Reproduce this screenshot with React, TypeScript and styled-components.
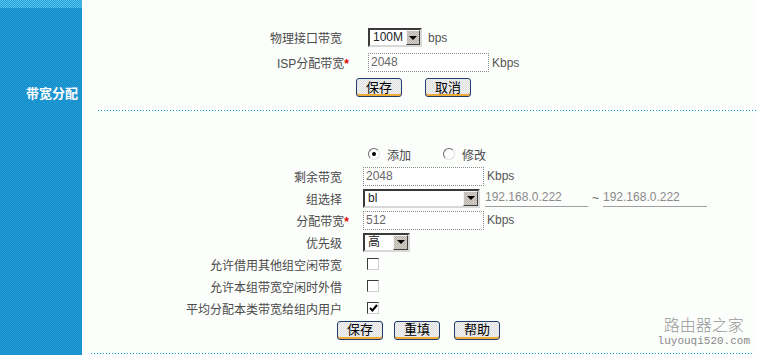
import styled, { createGlobalStyle } from 'styled-components';

const GlobalStyle = createGlobalStyle`
  html, body {
    margin: 0;
    padding: 0;
  }
  body {
    background: #fcfefc;
    font-family: "Liberation Sans", "Noto Sans CJK SC", sans-serif;
    font-size: 12px;
    color: #444;
  }
`

const Page = styled.div`
  position: relative;
  display: flex;
  width: 757px;
  height: 355px;
  overflow: hidden;
  background: #fcfefc;
`

const Sidebar = styled.aside`
  width: 82px;
  flex: none;
  display: flex;
  flex-direction: column;
  background: repeating-conic-gradient(#168cc8 0 25%, #1f9bd5 0 50%) 0 0 / 2px 2px;
`

const SidebarBand = styled.div`
  height: 8px;
  background: repeating-conic-gradient(#24a0da 0 25%, #58c2ec 0 50%) 0 0 / 2px 2px;
`

const SidebarTitle = styled.div`
  margin-top: 78px;
  padding-right: 4px;
  text-align: right;
  color: #fff;
  font-size: 13px;
  font-weight: bold;
  line-height: 16px;
`

const Main = styled.main`
  flex: 1;
  display: flex;
  flex-direction: column;
`

const Form = styled.div<{ $gap: number; $row: number; $top: number }>`
  display: grid;
  grid-template-columns: 260px 1fr;
  grid-auto-rows: ${p => p.$row}px;
  column-gap: ${p => p.$gap}px;
  align-items: center;
  padding-top: ${p => p.$top}px;
`

const Label = styled.div`
  text-align: right;
  color: #4a4a4a;
  white-space: nowrap;
`

const Required = styled.span`
  color: #e00000;
  font-weight: bold;
  margin-right: -7px;
`

const Field = styled.div`
  display: flex;
  align-items: center;
`

const Unit = styled.span<{ $gap?: number }>`
  margin-left: ${p => p.$gap ?? 3}px;
  color: #555;
`

const TextInput = styled.div<{ $width: number }>`
  box-sizing: border-box;
  width: ${p => p.$width}px;
  height: 19px;
  padding: 0 2px;
  border: 1px dotted #8a8a8a;
  background: #fff;
  color: #666;
  line-height: 17px;
`

const SelectBox = styled.div<{ $width: number }>`
  box-sizing: border-box;
  display: flex;
  width: ${p => p.$width}px;
  height: 19px;
  border: 2px solid;
  border-color: #3a3a3a #d8d8d8 #d8d8d8 #3a3a3a;
  background: #fff;
`

const SelectValue = styled.div`
  flex: 1;
  padding: 0 3px;
  color: #222;
  line-height: 15px;
`

const SelectArrow = styled.div`
  box-sizing: border-box;
  width: 15px;
  display: flex;
  align-items: center;
  justify-content: center;
  border: 1px solid;
  border-color: #f4f4f4 #404040 #404040 #f4f4f4;
  background: repeating-conic-gradient(#d8d0c8 0 25%, #b8b4b0 0 50%) 0 0 / 2px 2px;

  &::after {
    content: '';
    border-left: 4px solid transparent;
    border-right: 4px solid transparent;
    border-top: 4px solid #000;
  }
`

const IpField = styled.div<{ $width: number; $gap?: number }>`
  width: ${p => p.$width}px;
  height: 17px;
  margin-left: ${p => p.$gap ?? 0}px;
  border-bottom: 1px solid #a0a0a0;
  color: #8a8a8a;
  line-height: 17px;
`

const Tilde = styled.span`
  margin: 0 4px;
  color: #666;
`

const RadioGroup = styled.div`
  display: flex;
  align-items: center;
  gap: 32px;
  margin-left: 5px;
`

const RadioOption = styled.label`
  display: flex;
  align-items: center;
  gap: 7px;
  color: #4a4a4a;
`

const RadioDot = styled.span<{ $checked?: boolean }>`
  box-sizing: border-box;
  width: 12px;
  height: 12px;
  border-radius: 50%;
  border: 1px solid;
  border-color: #6a6a6a #e0e0e0 #e0e0e0 #6a6a6a;
  background: #fff;
  display: flex;
  align-items: center;
  justify-content: center;

  &::after {
    content: '';
    width: 4px;
    height: 4px;
    border-radius: 50%;
    background: ${p => (p.$checked ? '#000' : 'transparent')};
  }
`

const CheckBox = styled.span`
  box-sizing: border-box;
  width: 12px;
  height: 12px;
  margin-left: 4px;
  border: 1px solid;
  border-color: #3a3a3a #d0d0d0 #d0d0d0 #3a3a3a;
  background: #fff;
  display: flex;
  align-items: center;
  justify-content: center;
`

const ButtonRow = styled.div<{ $indent: number; $gap: number }>`
  grid-column: 1 / -1;
  display: flex;
  align-items: center;
  gap: ${p => p.$gap}px;
  padding-left: ${p => p.$indent}px;
`

const Button = styled.button<{ $shift?: number }>`
  box-sizing: border-box;
  width: 46px;
  height: 19px;
  margin-left: ${p => p.$shift ?? 0}px;
  padding: 0;
  border: 1px solid #1e3f6e;
  border-radius: 3px;
  background: repeating-conic-gradient(#f6f6f6 0 25%, #dcdcdc 0 50%) 0 0 / 2px 2px;
  box-shadow: inset 0 -2px 0 #f0aa3a;
  font-family: "Liberation Sans", "Noto Sans CJK SC", sans-serif;
  font-size: 13px;
  line-height: 16px;
  color: #000;
`

const Divider = styled.div<{ $left: number; $right: number; $top: number }>`
  height: 1px;
  margin: ${p => p.$top}px ${p => p.$right}px 0 ${p => p.$left}px;
  background: linear-gradient(to right, #1a9ad6 1px, transparent 1px) 0 0 / 3px 1px;
`

const Watermark = styled.div`
  position: absolute;
  right: 7px;
  top: 314px;
  display: flex;
  flex-direction: column;
  align-items: center;
  color: #999;
`

const WatermarkTitle = styled.div`
  font-family: "Noto Sans CJK SC", sans-serif;
  font-size: 16px;
  font-weight: 300;
  line-height: 20px;
`

const WatermarkUrl = styled.div`
  font-family: "Liberation Mono", monospace;
  font-size: 11px;
  line-height: 14px;
  color: #888;
`

function Select({ width, value }: { width: number; value: string }) {
  return (
    <SelectBox $width={width}>
      <SelectValue>{value}</SelectValue>
      <SelectArrow />
    </SelectBox>
  )
}

function Check({ checked }: { checked?: boolean }) {
  return (
    <CheckBox>
      {checked && (
        <svg width="9" height="8" viewBox="0 0 9 8">
          <path d="M1 4 L3.5 6.5 L8 1" fill="none" stroke="#000" strokeWidth="2" />
        </svg>
      )}
    </CheckBox>
  )
}

export default function App() {
  return (
    <>
      <GlobalStyle />
      <Page>
        <Sidebar>
          <SidebarBand />
          <SidebarTitle>带宽分配</SidebarTitle>
        </Sidebar>
        <Main>
          <Form $gap={26} $row={25} $top={25}>
            <Label>物理接口带宽</Label>
            <Field>
              <Select width={54} value="100M" />
              <Unit $gap={6}>bps</Unit>
            </Field>
            <Label>ISP分配带宽<Required>*</Required></Label>
            <Field>
              <TextInput $width={121}>2048</TextInput>
              <Unit>Kbps</Unit>
            </Field>
            <ButtonRow $indent={274} $gap={23}>
              <Button>保存</Button>
              <Button>取消</Button>
            </ButtonRow>
          </Form>
          <Divider $left={16} $right={0} $top={10} />

          <Form $gap={21} $row={22} $top={32}>
            <span />
            <RadioGroup>
              <RadioOption><RadioDot $checked />添加</RadioOption>
              <RadioOption><RadioDot />修改</RadioOption>
            </RadioGroup>
            <Label>剩余带宽</Label>
            <Field>
              <TextInput $width={121}>2048</TextInput>
              <Unit>Kbps</Unit>
            </Field>
            <Label>组选择</Label>
            <Field>
              <Select width={117} value="bl" />
              <IpField $width={103} $gap={5}>192.168.0.222</IpField>
              <Tilde>~</Tilde>
              <IpField $width={104}>192.168.0.222</IpField>
            </Field>
            <Label>分配带宽<Required>*</Required></Label>
            <Field>
              <TextInput $width={121}>512</TextInput>
              <Unit>Kbps</Unit>
            </Field>
            <Label>优先级</Label>
            <Field>
              <Select width={47} value="高" />
            </Field>
            <Label>允许借用其他组空闲带宽</Label>
            <Field><Check /></Field>
            <Label>允许本组带宽空闲时外借</Label>
            <Field><Check /></Field>
            <Label>平均分配本类带宽给组内用户</Label>
            <Field><Check checked /></Field>
            <ButtonRow $indent={255} $gap={11}>
              <Button>保存</Button>
              <Button>重填</Button>
              <Button $shift={3}>帮助</Button>
            </ButtonRow>
          </Form>
          <Divider $left={9} $right={5} $top={12} />
        </Main>
        <Watermark>
          <WatermarkTitle>路由器之家</WatermarkTitle>
          <WatermarkUrl>luyouqi520.com</WatermarkUrl>
        </Watermark>
      </Page>
    </>
  )
}
